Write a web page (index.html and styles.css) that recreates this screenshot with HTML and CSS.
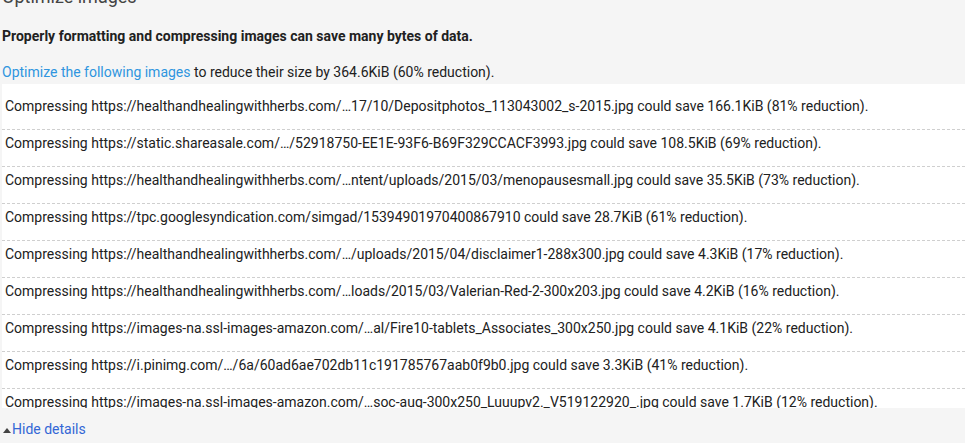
FILE: index.html
```html
<!DOCTYPE html>
<html lang="en">
<head>
<meta charset="utf-8">
<title>Optimize images</title>
<link rel="stylesheet" href="styles.css">
</head>
<body>
<div class="audit">
  <h3 class="audit-title">Optimize images</h3>
  <p class="audit-desc">Properly formatting and compressing images can save many bytes of data.</p>
  <p class="audit-summary"><a class="link" href="#">Optimize the following images</a> to reduce their size by 364.6KiB (60% reduction).</p>
  <div class="audit-list">
    <div class="row">Compressing https://healthandhealingwithherbs.com/…17/10/Depositphotos_113043002_s-2015.jpg could save 166.1KiB (81% reduction).</div>
    <div class="row">Compressing https://static.shareasale.com/…/52918750-EE1E-93F6-B69F329CCACF3993.jpg could save 108.5KiB (69% reduction).</div>
    <div class="row">Compressing https://healthandhealingwithherbs.com/…ntent/uploads/2015/03/menopausesmall.jpg could save 35.5KiB (73% reduction).</div>
    <div class="row">Compressing https://tpc.googlesyndication.com/simgad/15394901970400867910 could save 28.7KiB (61% reduction).</div>
    <div class="row">Compressing https://healthandhealingwithherbs.com/…/uploads/2015/04/disclaimer1-288x300.jpg could save 4.3KiB (17% reduction).</div>
    <div class="row">Compressing https://healthandhealingwithherbs.com/…loads/2015/03/Valerian-Red-2-300x203.jpg could save 4.2KiB (16% reduction).</div>
    <div class="row">Compressing https://images-na.ssl-images-amazon.com/…al/Fire10-tablets_Associates_300x250.jpg could save 4.1KiB (22% reduction).</div>
    <div class="row">Compressing https://i.pinimg.com/…/6a/60ad6ae702db11c191785767aab0f9b0.jpg could save 3.3KiB (41% reduction).</div>
    <div class="row">Compressing https://images-na.ssl-images-amazon.com/…soc-aug-300x250_Luuupv2._V519122920_.jpg could save 1.7KiB (12% reduction).</div>
  </div>
  <a class="toggle" href="#"><span class="tri"></span>Hide details</a>
</div>
</body>
</html>
```
FILE: styles.css
```css
html, body {
  margin: 0;
  padding: 0;
  background: #f5f5f5;
  font-family: Roboto, "Liberation Sans", sans-serif;
  color: #212121;
  overflow: hidden;
}

.audit {
  margin-top: -14px;
  padding-left: 2px;
  display: flex;
  flex-direction: column;
  align-items: stretch;
}

.audit-title {
  margin: 0;
  font-size: 18px;
  line-height: 22px;
  font-weight: 400;
  color: #444;
}

.audit-desc {
  margin: 18px 0 0;
  font-size: 14px;
  line-height: 20px;
  font-weight: 700;
}

.audit-summary {
  margin: 16px 0 0;
  font-size: 14px;
  line-height: 20px;
}

.link {
  color: #2f95df;
  text-decoration: none;
}

.audit-list {
  margin-top: 2px;
  background: #fff;
  height: 324px;
  overflow: hidden;
  padding-top: 9px;
  box-sizing: border-box;
}

.row {
  padding: 3px 3px 13px;
  font-size: 14px;
  line-height: 20px;
  white-space: nowrap;
  border-bottom: 1px dashed #cfcfcf;
}

.toggle {
  margin-top: 12px;
  align-self: flex-start;
  display: flex;
  align-items: center;
  font-size: 14px;
  line-height: 18px;
  color: #3367d6;
  text-decoration: none;
  margin-left: -1px;
}

.tri {
  width: 0;
  height: 0;
  border-left: 4px solid transparent;
  border-right: 4px solid transparent;
  border-bottom: 5px solid #444;
  margin: 3px 1px 0 2px;
}
```
